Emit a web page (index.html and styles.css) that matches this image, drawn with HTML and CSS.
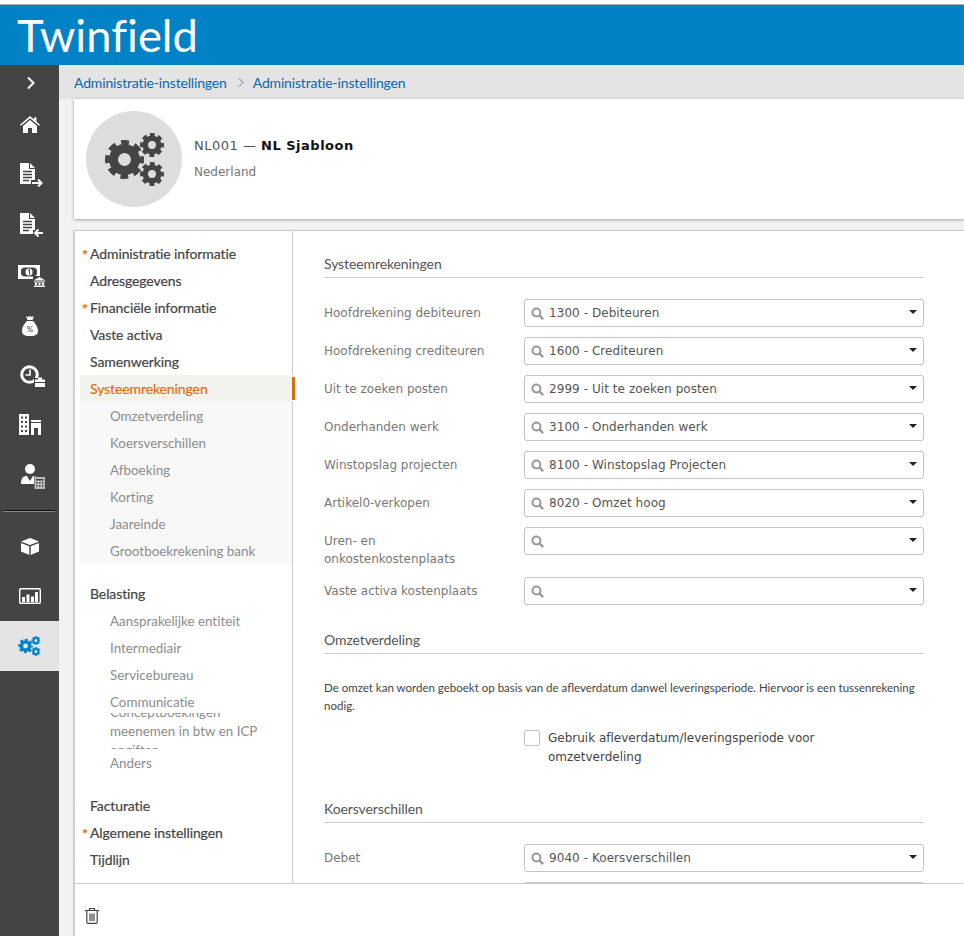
FILE: index.html
```html
<!DOCTYPE html>
<html lang="nl">
<head>
<meta charset="utf-8">
<title>Twinfield</title>
<link rel="stylesheet" href="styles.css">
</head>
<body>
<svg class="defs" width="0" height="0" aria-hidden="true">
  <symbol id="gear" viewBox="-12 -12 24 24">
    <circle r="10" fill="none" stroke="currentColor" stroke-width="4" stroke-dasharray="4.6 3.254" stroke-dashoffset="2.3"/>
    <circle r="6.750" fill="none" stroke="currentColor" stroke-width="5.500"/>
  </symbol>
  <symbol id="gears" viewBox="0 0 60 53">
    <use href="#gear" x="0" y="7" width="39" height="39"/>
    <use href="#gear" x="35" y="0" width="24" height="24"/>
    <use href="#gear" x="35" y="29" width="24" height="24"/>
  </symbol>
  <symbol id="doc" viewBox="0 0 16 21">
    <path d="M0 0h9v6h6v15H0z" fill="#fff"/>
    <path d="M10 0l5 5h-5z" fill="#fff"/>
    <path d="M3 8.500h9M3 11.500h9M3 14.500h9M3 17.500h6" stroke="#444" stroke-width="1.400"/>
  </symbol>
  <symbol id="mag" viewBox="0 0 12 12">
    <circle cx="5" cy="5" r="3.700" fill="none" stroke="#999" stroke-width="1.800"/>
    <path d="M7.800 7.800l3.400 3.400" stroke="#999" stroke-width="2.200"/>
  </symbol>
</svg>

<header class="topbar"><span class="brand">Twinfield</span></header>

<div class="shell">
  <nav class="rail">
    <div class="rail-toggle">
      <svg width="10" height="14" viewBox="0 0 10 14"><path d="M2 1.500L7.500 7 2 12.500" fill="none" stroke="#fff" stroke-width="2"/></svg>
    </div>
    <a class="rail-item rail-home">
      <svg width="20" height="17" viewBox="0 0 20 17"><path d="M10 0l4 3.500V1.500h2.500v4.200L20 8.800l-1 1L10 2.300 1 9.800l-1-1z" fill="#fff"/><path d="M3 10l7-6 7 6v7h-5v-5H8v5H3z" fill="#fff"/></svg>
    </a>
    <a class="rail-item rail-doc">
      <svg width="24" height="26" viewBox="0 0 24 26"><use href="#doc" width="16" height="21" x="0" y="0"/><path d="M11 20h9" stroke="#444" stroke-width="6"/><path d="M12 20h9M18 16.500l3.500 3.500-3.500 3.500" fill="none" stroke="#fff" stroke-width="2"/></svg>
    </a>
    <a class="rail-item rail-doc">
      <svg width="24" height="26" viewBox="0 0 24 26"><use href="#doc" width="16" height="21" x="0" y="0"/><path d="M13 20h10" stroke="#444" stroke-width="6"/><path d="M23 20h-8M18.500 16.500L15 20l3.500 3.500" fill="none" stroke="#fff" stroke-width="2"/></svg>
    </a>
    <a class="rail-item rail-money">
      <svg width="28" height="22" viewBox="0 0 28 22"><path d="M0 0h22v14H0z" fill="#fff"/><rect x="3" y="2.500" width="16" height="9" rx="4" fill="#444"/><circle cx="11" cy="7" r="3.500" fill="#fff"/><path d="M10 5.500l1.500-1v5" stroke="#444" fill="none"/><path d="M15 11h13v11H15z" fill="#444"/><path d="M15.500 15.500l6-3.500 6 3.500zM16 16.500h11v1H16zM17 18h2v2h-2zM20.500 18h2v2h-2zM24 18h2v2h-2zM16 20.500h11V22H16z" fill="#fff"/></svg>
    </a>
    <a class="rail-item rail-plain">
      <svg width="16" height="20" viewBox="0 0 16 20"><path d="M4 0l2 1 2-1 2 1 2-1-1.500 4h-5zM5 5h6c2 2 5 6 5 10 0 3-2 5-8 5s-8-2-8-5c0-4 3-8 5-10z" fill="#fff"/><text class="bag-text" x="8" y="15.500">%</text></svg>
    </a>
    <a class="rail-item rail-clock">
      <svg width="26" height="23" viewBox="0 0 26 23"><circle cx="9.500" cy="9.500" r="7.800" fill="none" stroke="#fff" stroke-width="3"/><path d="M10 4.500v5.500H5.500" fill="none" stroke="#fff" stroke-width="1.600"/><path d="M14 13h12v10H14z" fill="#444"/><path d="M15 14.500h10V22H15zM18 14.500v-2h4v2" fill="#fff"/><path d="M15 17.500h10" stroke="#444"/></svg>
    </a>
    <a class="rail-item rail-plain rail-up">
      <svg width="22" height="21" viewBox="0 0 22 21"><path d="M0 0h10v21H0z" fill="#fff"/><path d="M2 2.500h2v2H2zM6 2.500h2v2H6zM2 7h2v2H2zM6 7h2v2H6zM2 11.500h2v2H2zM6 11.500h2v2H6zM2 16h2v2H2zM6 16h2v2H6z" fill="#444"/><path d="M12 6h10v2H12zM12 9h10v12h-3v-7h-4v7h-3z" fill="#fff"/></svg>
    </a>
    <a class="rail-item rail-clock">
      <svg width="26" height="25" viewBox="0 0 26 25"><circle cx="10" cy="5" r="5" fill="#fff"/><path d="M1 20c0-6 2-8 6-8l3 5 3-5c3 0 5 1 5 3v5H1z" fill="#fff"/><path d="M14 12.500h12V25H14z" fill="#444"/><path d="M14.500 13h10.500v12H14.500z" fill="#bbb"/><path d="M16 15h7.500v1.500H16zM16 18h1.500v1.500H16zM19 18h1.500v1.500H19zM22 18h1.500v1.500H22zM16 21h1.500v1.500H16zM19 21h1.500v1.500H19zM22 21h1.500v1.500H22z" fill="#444"/></svg>
    </a>
    <div class="rail-divider"></div>
    <a class="rail-item rail-plain">
      <svg width="18" height="17" viewBox="0 0 18 17"><path d="M9 0l9 3.500L9 7 0 3.500z" fill="#fff"/><path d="M0 5l8.300 3.200V17L0 13.500zM18 5L9.700 8.200V17L18 13.500z" fill="#fff"/></svg>
    </a>
    <a class="rail-item rail-plain">
      <svg width="22" height="16" viewBox="0 0 22 16"><rect x=".7" y=".7" width="20.600" height="14.600" rx="1" fill="none" stroke="#fff" stroke-width="1.400"/><path d="M3 9h3v5H3zM7.500 6.500h3V14h-3zM12 8.500h3V14h-3zM16 4h3v10h-3z" fill="#fff"/></svg>
    </a>
    <a class="rail-item rail-plain rail-active">
      <svg class="rail-gears" width="23" height="20"><use href="#gears" width="23" height="20"/></svg>
    </a>
  </nav>

  <main class="page">
    <div class="crumbs">
      <a class="crumb">Administratie-instellingen</a>
      <svg class="crumb-sep" width="6" height="9" viewBox="0 0 6 9"><path d="M1 .5l4 4-4 4" fill="none" stroke="#777"/></svg>
      <a class="crumb">Administratie-instellingen</a>
    </div>

    <div class="content">
      <section class="summary">
        <div class="avatar"><svg class="avatar-gears" width="60" height="53"><use href="#gears" width="60" height="53"/></svg></div>
        <div class="summary-text">
          <div class="summary-title">NL001 — <b>NL Sjabloon</b></div>
          <div class="summary-sub">Nederland</div>
        </div>
      </section>

      <section class="card">
        <div class="card-body">
          <aside class="side">
            <a class="s-item req">Administratie informatie</a>
            <a class="s-item">Adresgegevens</a>
            <a class="s-item req">Financiële informatie</a>
            <a class="s-item">Vaste activa</a>
            <a class="s-item">Samenwerking</a>
            <a class="s-item s-current">Systeemrekeningen</a>
            <div class="s-group s-group-open">
              <a class="s-sub">Omzetverdeling</a>
              <a class="s-sub">Koersverschillen</a>
              <a class="s-sub">Afboeking</a>
              <a class="s-sub">Korting</a>
              <a class="s-sub">Jaareinde</a>
              <a class="s-sub">Grootboekrekening bank</a>
            </div>
            <a class="s-item s-gap">Belasting</a>
            <div class="s-group">
              <a class="s-sub">Aansprakelijke entiteit</a>
              <a class="s-sub">Intermediair</a>
              <a class="s-sub">Servicebureau</a>
              <a class="s-sub">Communicatie</a>
              <a class="s-sub s-clip">Conceptboekingen meenemen in btw en ICP opgiften</a>
              <a class="s-sub">Anders</a>
            </div>
            <a class="s-item s-gap">Facturatie</a>
            <a class="s-item req">Algemene instellingen</a>
            <a class="s-item">Tijdlijn</a>
          </aside>

          <div class="form">
            <h2 class="f-title f-first">Systeemrekeningen</h2>
            <div class="f-row"><label class="f-label">Hoofdrekening debiteuren</label><div class="lookup"><svg class="mag" width="13" height="13"><use href="#mag" width="13" height="13"/></svg><span class="val">1300 - Debiteuren</span><i class="caret"></i></div></div>
            <div class="f-row"><label class="f-label">Hoofdrekening crediteuren</label><div class="lookup"><svg class="mag" width="13" height="13"><use href="#mag" width="13" height="13"/></svg><span class="val">1600 - Crediteuren</span><i class="caret"></i></div></div>
            <div class="f-row"><label class="f-label">Uit te zoeken posten</label><div class="lookup"><svg class="mag" width="13" height="13"><use href="#mag" width="13" height="13"/></svg><span class="val">2999 - Uit te zoeken posten</span><i class="caret"></i></div></div>
            <div class="f-row"><label class="f-label">Onderhanden werk</label><div class="lookup"><svg class="mag" width="13" height="13"><use href="#mag" width="13" height="13"/></svg><span class="val">3100 - Onderhanden werk</span><i class="caret"></i></div></div>
            <div class="f-row"><label class="f-label">Winstopslag projecten</label><div class="lookup"><svg class="mag" width="13" height="13"><use href="#mag" width="13" height="13"/></svg><span class="val">8100 - Winstopslag Projecten</span><i class="caret"></i></div></div>
            <div class="f-row"><label class="f-label">Artikel0-verkopen</label><div class="lookup"><svg class="mag" width="13" height="13"><use href="#mag" width="13" height="13"/></svg><span class="val">8020 - Omzet hoog</span><i class="caret"></i></div></div>
            <div class="f-row f-row-tall"><label class="f-label f-label-wrap">Uren- en onkostenkostenplaats</label><div class="lookup"><svg class="mag" width="13" height="13"><use href="#mag" width="13" height="13"/></svg><span class="val"></span><i class="caret"></i></div></div>
            <div class="f-row"><label class="f-label">Vaste activa kostenplaats</label><div class="lookup"><svg class="mag" width="13" height="13"><use href="#mag" width="13" height="13"/></svg><span class="val"></span><i class="caret"></i></div></div>

            <h2 class="f-title f-second">Omzetverdeling</h2>
            <p class="f-note">De omzet kan worden geboekt op basis van de afleverdatum danwel leveringsperiode. Hiervoor is een tussenrekening nodig.</p>
            <div class="f-check"><span class="box"></span><span class="check-text">Gebruik afleverdatum/leveringsperiode voor omzetverdeling</span></div>

            <h2 class="f-title f-third">Koersverschillen</h2>
            <div class="f-row"><label class="f-label">Debet</label><div class="lookup"><svg class="mag" width="13" height="13"><use href="#mag" width="13" height="13"/></svg><span class="val">9040 - Koersverschillen</span><i class="caret"></i></div></div>
            <div class="f-row"><div class="f-label"></div><div class="lookup"></div></div>
          </div>
        </div>
        <footer class="card-foot">
          <svg width="16" height="17" viewBox="0 0 16 17"><path d="M1 3.500h14M5.500 3.500V1.500h5v2M2.800 3.500v11.500q0 1.300 1.300 1.300h7.800q1.300 0 1.300-1.300V3.500M6 6.500v7.500M8 6.500v7.500M10 6.500v7.500" fill="none" stroke="#444" stroke-width="1.200"/></svg>
        </footer>
      </section>
    </div>
  </main>
</div>
</body>
</html>
```

FILE: styles.css
```css
* { box-sizing: border-box; }
html, body { margin: 0; height: 936px; overflow: hidden; background: #fff; }
body { font-family: "Lato", "Liberation Sans", sans-serif; display: flex; flex-direction: column; padding-top: 4px; font-variant-ligatures: none; }
.defs { position: absolute; }
.topbar { height: 61px; background: #0282c6; border-top: 1px solid #b5b5b5; padding-left: 17px; flex: none; }
.brand { display: block; color: #fff; font-size: 45.3px; line-height: 60px; }
.shell { flex: 1; display: flex; min-height: 0; }

.rail { width: 59px; flex: none; background: #444; display: flex; flex-direction: column; align-items: stretch; }
.rail-toggle { height: 36px; display: flex; align-items: center; justify-content: center; padding-left: 2px; }
.rail-item { height: 50px; flex: none; display: flex; align-items: center; justify-content: center; }
.rail-home svg { margin-top: -4px; }
.rail-doc { padding-left: 4px; }
.rail-money { padding-left: 5px; }
.rail-clock { padding-left: 6px; }
.rail-up svg { margin-top: -4px; }
.rail-divider { height: 2px; flex: none; margin: 9px 4px 9px 3px; background: #111; border-bottom: 1px solid #888; }
.rail-active { background: #e4e4e4; }
.rail-gears { color: #0282c6; }
.bag-text { font: 8px "Lato", sans-serif; fill: #444; text-anchor: middle; }

.page { flex: 1; min-width: 0; display: flex; flex-direction: column; background: #f2f2f2; }
.crumbs { height: 34px; flex: none; background: #e4e4e4; display: flex; align-items: center; padding-left: 15px; font-size: 14px; letter-spacing: -.16px; color: #0a67b0; }
.crumb-sep { margin: 1px 9px 0 11px; }
.content { flex: 1; min-height: 0; padding-left: 15px; display: flex; flex-direction: column; }

.summary { height: 120px; flex: none; background: #fff; box-shadow: 0 1px 3px rgba(0,0,0,.35); display: flex; align-items: center; padding-left: 12px; }
.avatar { width: 96px; height: 96px; border-radius: 50%; background: #ddd; color: #444; display: flex; align-items: center; justify-content: center; }
.avatar-gears { margin-left: 2px; }
.summary-text { margin-left: 12px; font-family: "DejaVu Sans", sans-serif; }
.summary-title { font-size: 13px; line-height: 18px; color: #555; letter-spacing: .5px; }
.summary-title b { color: #111; }
.summary-sub { font-size: 12px; line-height: 18px; color: #777; margin-top: 8px; }

.card { flex: 1; min-height: 0; margin-top: 11px; background: #fff; border-top: 1px solid #ccc; border-left: 1px solid #ccc; box-shadow: -1px 0 1px rgba(0,0,0,.12); display: flex; flex-direction: column; }
.card-body { height: 652px; flex: none; display: flex; overflow: hidden; }
.card-foot { flex: 1; border-top: 1px solid #ccc; padding: 23px 0 0 9px; }
.card-foot svg { display: block; }

.side { width: 218px; flex: none; border-right: 1px solid #ccc; padding: 9px 0 0 5px; position: relative; }
.s-item { display: block; height: 27px; line-height: 27px; padding-left: 10px; font-size: 14px; letter-spacing: -.1px; color: #444; -webkit-text-stroke: .2px #444; position: relative; }
.req::before { content: "*"; position: absolute; left: 2px; top: 1px; color: #e8731a; font-size: 14px; -webkit-text-stroke: .3px #e8731a; }
.s-current { background: #f3f3ee; color: #e46c0a; -webkit-text-stroke: .2px #e46c0a; margin-right: -1px; }
.s-current::after { content: ""; position: absolute; right: -2px; top: 2px; width: 3px; height: 23px; background: #d96c0b; }
.s-group-open { background: #f8f8f8; }
.s-sub { display: block; height: 27px; line-height: 27px; padding: 1px 0 0 30px; font-size: 13.4px; color: #8c8c8c; }
.s-clip { height: 36px; margin-top: -2px; line-height: 19px; overflow: hidden; padding: 1px 10px 0 30px; display: flex; align-items: center; position: relative; }
.s-gap { margin-top: 16px; }

.form { flex: none; width: 600px; margin-left: 31px; padding-top: 24px; font-family: "DejaVu Sans", sans-serif; }
.f-title { margin: 0; font: 400 14px/18px "Lato", sans-serif; letter-spacing: -.1px; color: #555; padding-bottom: 4px; border-bottom: 1px solid #ccc; }
.f-first { margin-bottom: 21px; }
.f-second { margin-top: 26px; margin-bottom: 25px; }
.f-third { margin-top: 33px; margin-bottom: 21px; }
.f-row { display: flex; align-items: flex-start; margin-bottom: 10px; }
.f-row-tall { height: 40px; }
.f-label { width: 200px; flex: none; font-size: 12px; line-height: 18px; padding-top: 5px; color: #777; }
.f-label-wrap { padding-right: 40px; }
.lookup { flex: 1; height: 28px; border: 1px solid #c4c4c4; border-radius: 3px; display: flex; align-items: center; padding: 0 6px 0 6px; }
.mag { flex: none; }
.val { flex: 1; margin-left: 5px; font-size: 12px; letter-spacing: .06px; color: #555; }
.caret { width: 0; height: 0; border: 4px solid transparent; border-top-color: #222; border-bottom: 0; margin-top: -2px; }
.f-note { margin: 0; font: 11.5px/18px "Lato", sans-serif; color: #444; }
.f-check { display: flex; margin: 14px 0 0 200px; }
.box { width: 16px; height: 16px; flex: none; border: 1px solid #c4c4c4; border-radius: 2px; margin: 1px 8px 0 0; background: #fff; }
.check-text { font-size: 12px; line-height: 19px; color: #444; padding-right: 90px; }
```
